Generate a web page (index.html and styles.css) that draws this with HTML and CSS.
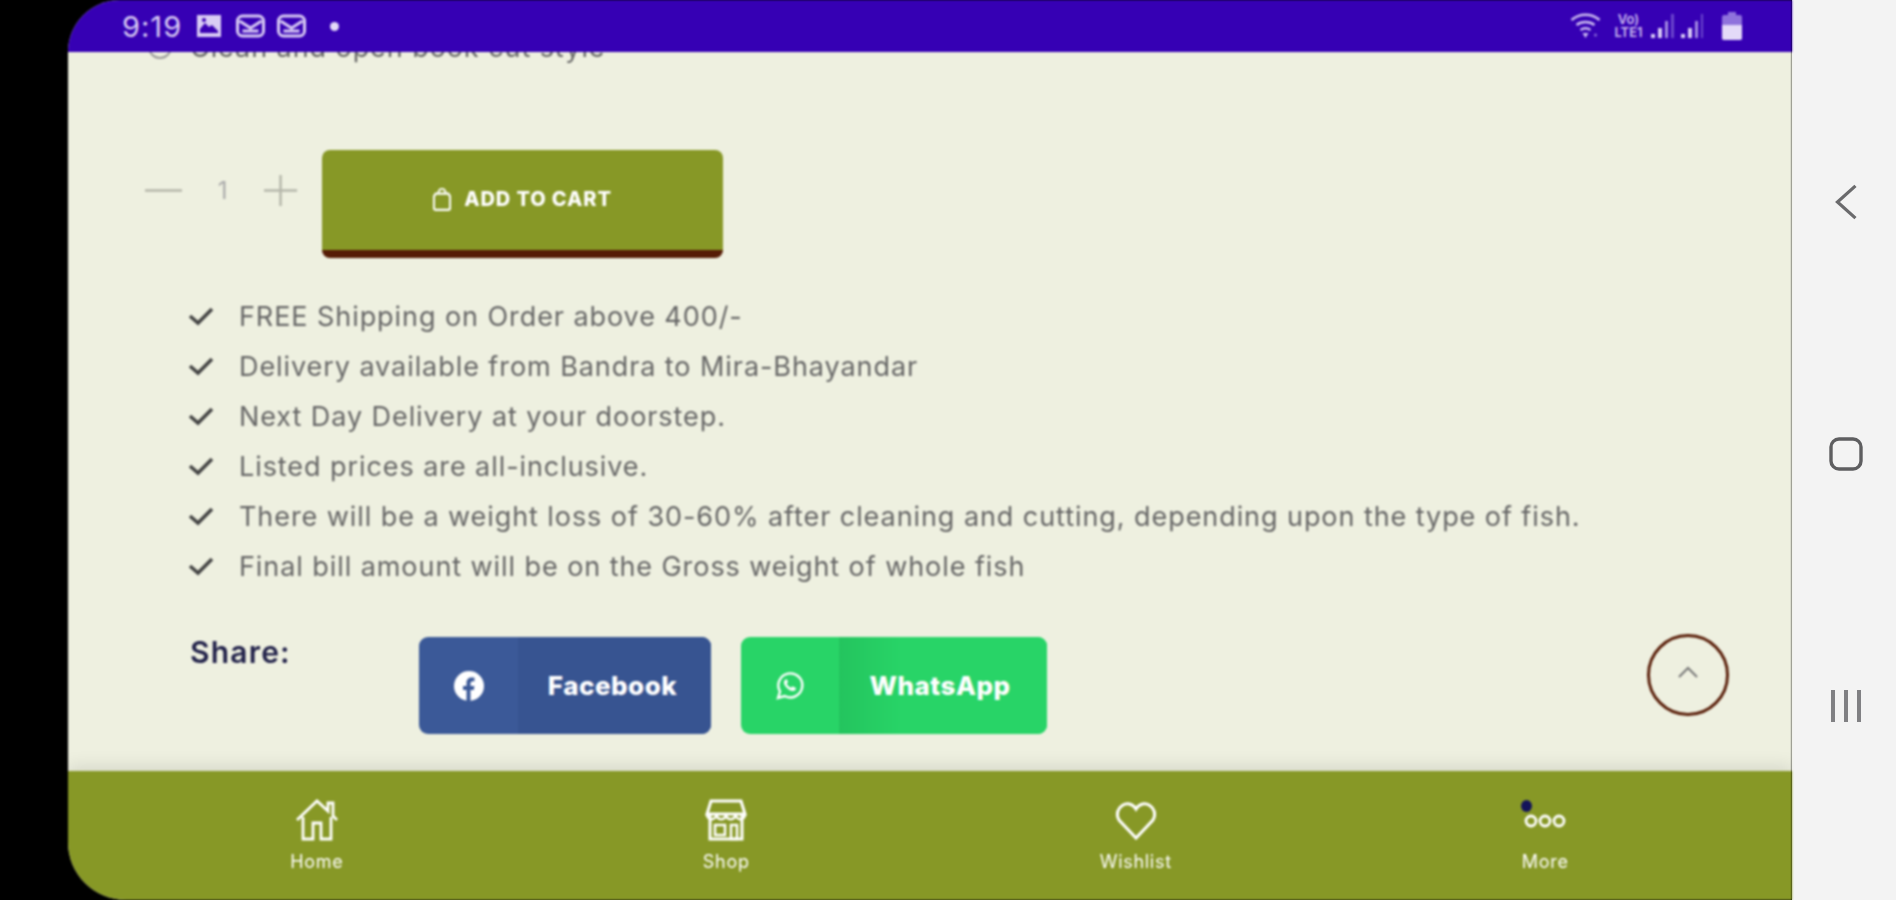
FILE: index.html
```html
<!DOCTYPE html>
<html lang="en">
<head>
  <meta charset="UTF-8" />
  <title>Product details</title>
  <link rel="stylesheet" href="styles.css">
</head>
<body>

  <div class="screen">
    <div class="status-bar">
      <div class="status-left">
        <span class="time">9:19</span>
        <svg class="st-img" viewBox="0 0 26 24"><path d="M1 1h24v22H1z" fill="#d9ccf4"/><path d="M4 15l5-6 4 4 3-2 6 6v2H4z" fill="#3a00b4"/><circle cx="8" cy="6" r="2" fill="#3a00b4"/></svg>
        <svg class="st-mail" viewBox="0 0 30 24"><rect x="2" y="2" width="26" height="20" rx="5" fill="none" stroke="#d9ccf4" stroke-width="3"/><path d="M4 7l11 7 11-7M7 17h16" fill="none" stroke="#d9ccf4" stroke-width="3"/></svg>
        <svg class="st-mail" viewBox="0 0 30 24"><rect x="2" y="2" width="26" height="20" rx="5" fill="none" stroke="#d9ccf4" stroke-width="3"/><path d="M4 7l11 7 11-7M7 17h16" fill="none" stroke="#d9ccf4" stroke-width="3"/></svg>
        <span class="st-dot"></span>
      </div>
      <div class="status-right">
        <svg class="st-wifi" viewBox="0 0 30 26"><path d="M1 7c8-7 20-7 28 0M6 12c5-4 13-4 18 0M10 17c3-2 7-2 10 0" fill="none" stroke="#cdbdf0" stroke-width="2.5"/><path d="M15 25l-3-5h6z" fill="#cdbdf0"/><circle cx="25" cy="22" r="1.5" fill="#8a6bd8"/></svg>
        <div class="st-volte"><span>Vo)</span><span>LTE1</span></div>
        <svg class="st-signal" viewBox="0 0 24 26"><path d="M1 21h4v4H1zM8 15h4v10H8z" fill="#d9ccf4"/><path d="M15 8h3v17h-3z" fill="#a48be2"/><path d="M21 1h3v24h-3z" fill="#6a45cc"/></svg>
        <svg class="st-signal" viewBox="0 0 24 26"><path d="M1 21h4v4H1zM8 15h4v10H8z" fill="#d9ccf4"/><path d="M15 8h3v17h-3z" fill="#a48be2"/><path d="M21 1h2v24h-2z" fill="#6a45cc"/></svg>
        <svg class="st-battery" viewBox="0 0 20 28"><path d="M6 0h8v3h4a2 2 0 0 1 2 2v21a2 2 0 0 1-2 2H2a2 2 0 0 1-2-2V5a2 2 0 0 1 2-2h4z" fill="#8f72dc"/><path d="M0 13h20v13a2 2 0 0 1-2 2H2a2 2 0 0 1-2-2z" fill="#e4daf8"/></svg>
      </div>
    </div>

    <div class="content">
      <div class="cut-line">
        <span class="cut-icon"></span>
        <span>Clean and open book cut style</span>
      </div>

      <div class="cart-row">
        <div class="qty">
          <svg class="qty-btn" viewBox="0 0 38 38"><path d="M0 19h38" stroke="#b5b6aa" stroke-width="2.5"/></svg>
          <span class="qty-num">1</span>
          <svg class="qty-btn" viewBox="0 0 38 38"><path d="M0 19h34M17 3v32" stroke="#b5b6aa" stroke-width="2.5"/></svg>
        </div>
        <button class="add-cart">
          <svg class="bag" viewBox="0 0 20 26"><path d="M3 7h14l2 3v13a2 2 0 0 1-2 2H3a2 2 0 0 1-2-2V10z" fill="none" stroke="#fff" stroke-width="2.4"/><path d="M6 7c0-7 8-7 8 0" fill="none" stroke="#fff" stroke-width="2"/></svg>
          ADD TO CART
        </button>
      </div>

      <ul class="points">
        <li><svg class="check" viewBox="0 0 26 20"><path d="M2 10l8 7L24 3" fill="none" stroke="#444" stroke-width="3.6"/></svg>FREE Shipping on Order above 400/-</li>
        <li><svg class="check" viewBox="0 0 26 20"><path d="M2 10l8 7L24 3" fill="none" stroke="#444" stroke-width="3.6"/></svg>Delivery available from Bandra to Mira-Bhayandar</li>
        <li><svg class="check" viewBox="0 0 26 20"><path d="M2 10l8 7L24 3" fill="none" stroke="#444" stroke-width="3.6"/></svg>Next Day Delivery at your doorstep.</li>
        <li><svg class="check" viewBox="0 0 26 20"><path d="M2 10l8 7L24 3" fill="none" stroke="#444" stroke-width="3.6"/></svg>Listed prices are all-inclusive.</li>
        <li><svg class="check" viewBox="0 0 26 20"><path d="M2 10l8 7L24 3" fill="none" stroke="#444" stroke-width="3.6"/></svg>There will be a weight loss of 30-60% after cleaning and cutting, depending upon the type of fish.</li>
        <li><svg class="check" viewBox="0 0 26 20"><path d="M2 10l8 7L24 3" fill="none" stroke="#444" stroke-width="3.6"/></svg>Final bill amount will be on the Gross weight of whole fish</li>
      </ul>

      <div class="share-row">
        <div class="share-label">Share:</div>
        <a class="share-btn fb">
          <span class="share-icon">
            <svg viewBox="0 0 30 30" class="share-svg"><circle cx="15" cy="15" r="15" fill="#fff"/><path d="M12.5 30V19H9v-4h3.500v-3c0-3.500 2-5.400 5.200-5.400 1.500 0 2.800.2 2.800.2v3.400h-1.700c-1.700 0-2.300 1.100-2.300 2.200V15h3.900l-.6 4h-3.300v11z" fill="#3b5998"/></svg>
          </span>
          <span class="share-text">Facebook</span>
        </a>
        <a class="share-btn wa">
          <span class="share-icon">
            <svg viewBox="0 0 30 30" class="share-svg"><path d="M3 27l2-6.500A12 12 0 1 1 9.700 25z" fill="none" stroke="#fff" stroke-width="2.400"/><path d="M10 9c-2 2-1 5 2 8s6 4 8.500 2l.5-2-3.500-1.800-1.500 1.500c-2-.8-3.500-2.300-4.300-4.300l1.500-1.500L11.500 8z" fill="#fff"/></svg>
          </span>
          <span class="share-text">WhatsApp</span>
        </a>
      </div>

      <div class="to-top">
        <svg viewBox="0 0 20 12" class="to-top-icon"><path d="M1 11l9-9 9 9" fill="none" stroke="#777" stroke-width="2"/></svg>
      </div>
    </div>

    <div class="bottom-bar">
      <div class="tab">
        <svg class="tab-icon" viewBox="0 0 44 44"><path d="M2 22L22 3l11 10V5h5v13l4 4M8 19v22h10V25h8v16h10V19" fill="none" stroke="#fff" stroke-width="2.800"/></svg>
        <span>Home</span>
      </div>
      <div class="tab">
        <svg class="tab-icon" viewBox="0 0 44 44"><path d="M7 3h30l4 13H3zM6 17v24h32V17" fill="none" stroke="#fff" stroke-width="3"/><path d="M3 16c0 7 9 7 9.500 0 .5 7 9 7 9.500 0 .5 7 9 7 9.500 0 .5 7 9.500 7 9.500 0" fill="none" stroke="#fff" stroke-width="2.500"/><path d="M11 27h10v10H11zM27 27h6v14h-6z" fill="none" stroke="#fff" stroke-width="2.500"/></svg>
        <span>Shop</span>
      </div>
      <div class="tab">
        <svg class="tab-icon" viewBox="0 0 44 44"><path d="M22 40L5 22C-2 10 15 -1 22 11 29 -1 46 10 39 22z" fill="none" stroke="#fff" stroke-width="3"/></svg>
        <span>Wishlist</span>
      </div>
      <div class="tab">
        <span class="more-wrap">
          <span class="badge"></span>
          <svg class="tab-icon" viewBox="0 0 44 44"><g fill="none" stroke="#fff" stroke-width="2.800"><circle cx="8" cy="23" r="5"/><circle cx="22" cy="23" r="5"/><circle cx="36" cy="23" r="5"/></g></svg>
        </span>
        <span>More</span>
      </div>
    </div>
  </div>

  <div class="nav-side">
    <svg class="nav-icon" viewBox="0 0 26 38"><path d="M23 2L4 19l19 17" fill="none" stroke="#6a6a6c" stroke-width="3.400"/></svg>
    <svg class="nav-icon" viewBox="0 0 36 34"><rect x="3" y="2" width="30" height="30" rx="8" fill="none" stroke="#5e5e60" stroke-width="3.400"/></svg>
    <svg class="nav-icon" viewBox="0 0 36 34"><path d="M5 1v32M18 1v32M31 1v32" fill="none" stroke="#808083" stroke-width="4"/></svg>
  </div>

</body>
</html>
```

FILE: styles.css
```css
body {
  margin: 0;
  height: 900px;
  overflow: hidden;
  background: #000;
  display: flex;
  padding-left: 68px;
  font-family: "Inter", "Open Sans", sans-serif;
}
.screen {
  width: 1724px;
  height: 900px;
  display: flex;
  flex-direction: column;
  background: #eef0e0;
  border-radius: 52px 0 0 58px;
  overflow: hidden;
  filter: blur(0.9px);
}

/* status bar */
.status-bar {
  height: 52px;
  flex-shrink: 0;
  background: #3600b4;
  display: flex;
  justify-content: space-between;
  align-items: center;
  padding: 0 50px 0 54px;
  position: relative;
  z-index: 2;
}
.status-left, .status-right {
  display: flex;
  align-items: center;
}
.time {
  color: #d9ccf4;
  font-size: 29px;
  letter-spacing: 1px;
  width: 74px;
}
.st-img {
  width: 26px;
  height: 24px;
  margin-right: 13px;
}
.st-mail {
  width: 31px;
  height: 24px;
  margin-right: 10px;
}
.st-dot {
  width: 9px;
  height: 9px;
  border-radius: 50%;
  background: #e4daf8;
  margin-left: 13px;
}
.st-wifi {
  width: 31px;
  height: 26px;
  margin-right: 11px;
}
.st-volte {
  width: 33px;
  display: flex;
  flex-direction: column;
  align-items: center;
  color: #cdbdf0;
  font-size: 13px;
  line-height: 13px;
  font-weight: 600;
  margin-right: 5px;
}
.st-signal {
  width: 24px;
  height: 26px;
  margin-right: 6px;
}
.st-battery {
  width: 20px;
  height: 28px;
  margin-left: 12px;
}

/* main content */
.content {
  flex: 1;
  min-height: 0;
  position: relative;
  overflow: hidden;
  color: #666;
  font-size: 27px;
  letter-spacing: 0.93px;
}
.cut-line {
  display: flex;
  align-items: center;
  gap: 18px;
  height: 34px;
  margin-top: -22px;
  padding-left: 80px;
}
.cut-icon {
  width: 24px;
  height: 24px;
  border: 2px solid #999;
  border-radius: 50%;
  box-sizing: border-box;
}
.cart-row {
  display: flex;
  margin-top: 86px;
  padding-left: 77px;
}
.qty {
  display: flex;
  align-items: center;
  height: 80px;
  width: 177px;
}
.qty-btn {
  width: 37px;
  height: 37px;
  flex-shrink: 0;
}
.qty-num {
  width: 82px;
  text-align: center;
  color: #aaa;
  font-size: 24px;
}
.add-cart {
  width: 401px;
  height: 108px;
  border: 0;
  border-bottom: 8px solid #561c06;
  border-radius: 8px;
  background: #879826;
  color: #fff;
  font-family: inherit;
  font-size: 20px;
  font-weight: 800;
  letter-spacing: 0.9px;
  padding: 0 0 3px;
  display: flex;
  align-items: center;
  justify-content: center;
  gap: 13px;
}
.bag {
  width: 18px;
  height: 24px;
}

.points {
  list-style: none;
  margin: 33px 0 0;
  padding: 0 0 0 120px;
}
.points li {
  height: 50px;
  display: flex;
  align-items: center;
}
.check {
  width: 26px;
  height: 20px;
  margin-right: 25px;
  flex-shrink: 0;
}

.share-row {
  display: flex;
  margin-top: 46px;
  padding-left: 122px;
}
.share-label {
  width: 229px;
  color: #22224a;
  font-weight: 600;
  font-size: 30px;
  letter-spacing: 1.2px;
  line-height: 30px;
}
.share-btn {
  display: flex;
  height: 97px;
  border-radius: 9px;
  overflow: hidden;
  color: #fff;
  font-size: 26px;
  font-weight: 800;
  letter-spacing: 0.5px;
  margin-right: 30px;
}
.share-icon {
  width: 99px;
  display: flex;
  align-items: center;
  justify-content: center;
}
.share-svg {
  width: 30px;
  height: 30px;
}
.share-text {
  display: flex;
  align-items: center;
  justify-content: center;
}
.fb {
  width: 292px;
  background: #3b5998;
}
.fb .share-text {
  flex: 1;
  background: #375491;
  padding-right: 4px;
}
.wa {
  width: 306px;
  background: #28d467;
}
.wa .share-icon {
  width: 98px;
}
.wa .share-text {
  flex: 1;
  background: linear-gradient(90deg, #24c45e, #28d467 30%);
  padding-right: 6px;
}
.to-top {
  position: absolute;
  left: 1579px;
  top: 582px;
  width: 82px;
  height: 82px;
  box-sizing: border-box;
  border: 3px solid #5a1f0a;
  border-radius: 50%;
  display: flex;
  align-items: center;
  justify-content: center;
}
.to-top-icon {
  width: 20px;
  height: 12px;
  margin-bottom: 6px;
}

/* bottom tabs */
.bottom-bar {
  height: 129px;
  flex-shrink: 0;
  background: #879826;
  box-shadow: 0 -5px 16px rgba(0, 0, 0, 0.1);
  display: flex;
  padding: 27px 42px 0 44px;
  box-sizing: border-box;
  position: relative;
}
.tab {
  flex: 1;
  display: flex;
  flex-direction: column;
  align-items: center;
  color: #fff;
  font-size: 18px;
  letter-spacing: 0.7px;
  gap: 9px;
}
.tab-icon {
  width: 44px;
  height: 44px;
  display: block;
}
.more-wrap {
  position: relative;
}
.badge {
  position: absolute;
  left: -2px;
  top: 2px;
  width: 11px;
  height: 12px;
  border-radius: 50%;
  background: #14145a;
}

/* android nav */
.nav-side {
  width: 104px;
  height: 900px;
  background: #f3f3f3;
  display: flex;
  flex-direction: column;
  align-items: center;
  gap: 216px;
  padding: 184px 0 0 4px;
  box-sizing: border-box;
}
.nav-icon {
  width: 36px;
  height: 36px;
}
```
